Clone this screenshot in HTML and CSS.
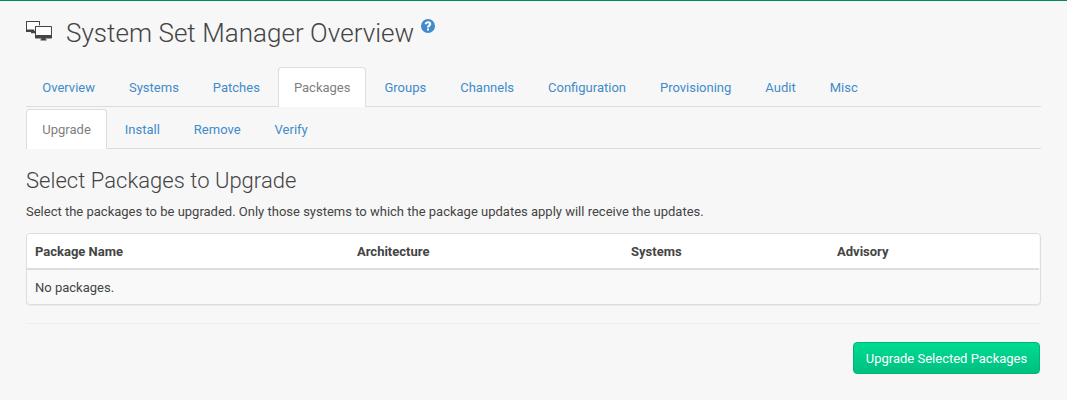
FILE: index.html
```html
<!DOCTYPE html>
<html lang="en">
<head>
<meta charset="utf-8">
<title>System Set Manager Overview</title>
<link rel="stylesheet" href="styles.css">
</head>
<body>
<main class="content">
  <h1 class="page-title">
    <svg class="title-icon" width="26" height="20" viewBox="0 0 26 20" aria-hidden="true">
      <path fill="#444" d="M.7 0h12.600q.7 0 .7.700V11H0V.7Q0 0 .7 0zM5 10h5v2.300H5z"/>
      <path fill="#fdfdfd" d="M1 1h12v7.500H1z"/>
      <path fill="#f7f7f7" d="M8.300 4.300H26V10H8.300z"/>
      <path fill="#444" d="M9.700 5h15.600q.7 0 .7.700v11q0 .7-.7.700H9.700q-.7 0-.7-.700v-11q0-.7.700-.7z"/>
      <path fill="#fdfdfd" d="M10 6h15v8H10z"/>
      <path fill="#444" d="M15.500 17h4v1.300h1v1.200h-6v-1.200h1z"/>
    </svg>
    <span>System Set Manager Overview</span>
    <svg class="help-icon" width="14" height="14" viewBox="0 0 14 14" role="img" aria-label="Help">
      <circle cx="7" cy="7" r="7" fill="#428bca"/>
      <path fill="none" stroke="#fff" stroke-width="2.100" d="M4.500 5.200C4.900 3.700 6 3.300 7 3.300c1.300 0 2.200.8 2.200 1.700C9.200 6.600 7 6.600 7 8.600"/>
      <path fill="#fff" d="M6 9.500h2v2H6z"/>
    </svg>
  </h1>
  <nav class="tabs">
    <a class="tab">Overview</a><a class="tab">Systems</a><a class="tab">Patches</a><a class="tab active">Packages</a><a class="tab">Groups</a><a class="tab">Channels</a><a class="tab">Configuration</a><a class="tab">Provisioning</a><a class="tab">Audit</a><a class="tab">Misc</a>
  </nav>
  <nav class="tabs tabs-sub">
    <a class="tab active">Upgrade</a><a class="tab">Install</a><a class="tab">Remove</a><a class="tab">Verify</a>
  </nav>
  <h2 class="section-title">Select Packages to Upgrade</h2>
  <p class="intro">Select the packages to be upgraded. Only those systems to which the package updates apply will receive the updates.</p>
  <div class="panel">
    <div class="row head"><span>Package Name</span><span>Architecture</span><span>Systems</span><span>Advisory</span></div>
    <div class="row empty">No packages.</div>
  </div>
  <hr class="divider">
  <div class="actions"><button class="btn">Upgrade Selected Packages</button></div>
</main>
</body>
</html>
```
FILE: styles.css
```css
* { box-sizing: border-box; }
body {
  margin: 0;
  height: 400px;
  overflow: hidden;
  border-top: 1px solid #00885f;
  background: #f7f7f7;
  color: #444;
  font: 13px/18px Roboto, sans-serif;
}
.content { padding: 17px 26px 0; }
.page-title {
  display: flex;
  height: 30px;
  margin: 0 0 19px;
  font-size: 26px;
  font-weight: 300;
  letter-spacing: .04px;
  line-height: 30px;
  white-space: nowrap;
}
.title-icon { margin: 3px 14px 0 0; }
.help-icon { margin: 1px 0 0 7px; }
.tabs {
  display: flex;
  gap: 2px;
  height: 40px;
  padding-left: .3px;
  border-bottom: 1px solid #ddd;
}
.tabs-sub { margin-top: 2px; }
.tab {
  height: 40px;
  padding: 11px 15px 0;
  border: 1px solid transparent;
  border-bottom: 0;
  border-radius: 4px 4px 0 0;
  color: #428bca;
}
.tab.active { background: #fff; border-color: #ddd; color: #808080; }
.section-title {
  margin: 19px 0 9px;
  font-size: 22px;
  font-weight: 300;
  letter-spacing: .03px;
  line-height: 26px;
}
.intro { margin: 0 0 12px; }
.panel {
  width: 1015px;
  height: 72px;
  border: 1px solid #ddd;
  border-radius: 4px;
  background: #f9f9f9;
  box-shadow: 0 1px 1px rgba(0, 0, 0, .05);
  overflow: hidden;
}
.row { padding: 0 8px; }
.head {
  display: grid;
  grid-template-columns: 322px 274px 206px 1fr;
  height: 36px;
  margin-right: 1px;
  border-bottom: 2px solid #ddd;
  background: #fff;
  font-weight: 700;
  line-height: 35px;
}
.empty { line-height: 36px; }
.divider {
  width: 1015px;
  height: 1px;
  margin: 18px 0;
  border: 0;
  background: #eee;
}
.actions { display: flex; justify-content: flex-end; padding-right: 1px; }
.btn {
  width: 187px;
  height: 32px;
  padding: 1px 0 0;
  border: 1px solid #00b576;
  border-radius: 4px;
  background: linear-gradient(#00db93, #00c081);
  color: #fff;
  font: 13px/30px Roboto, sans-serif;
}
```
